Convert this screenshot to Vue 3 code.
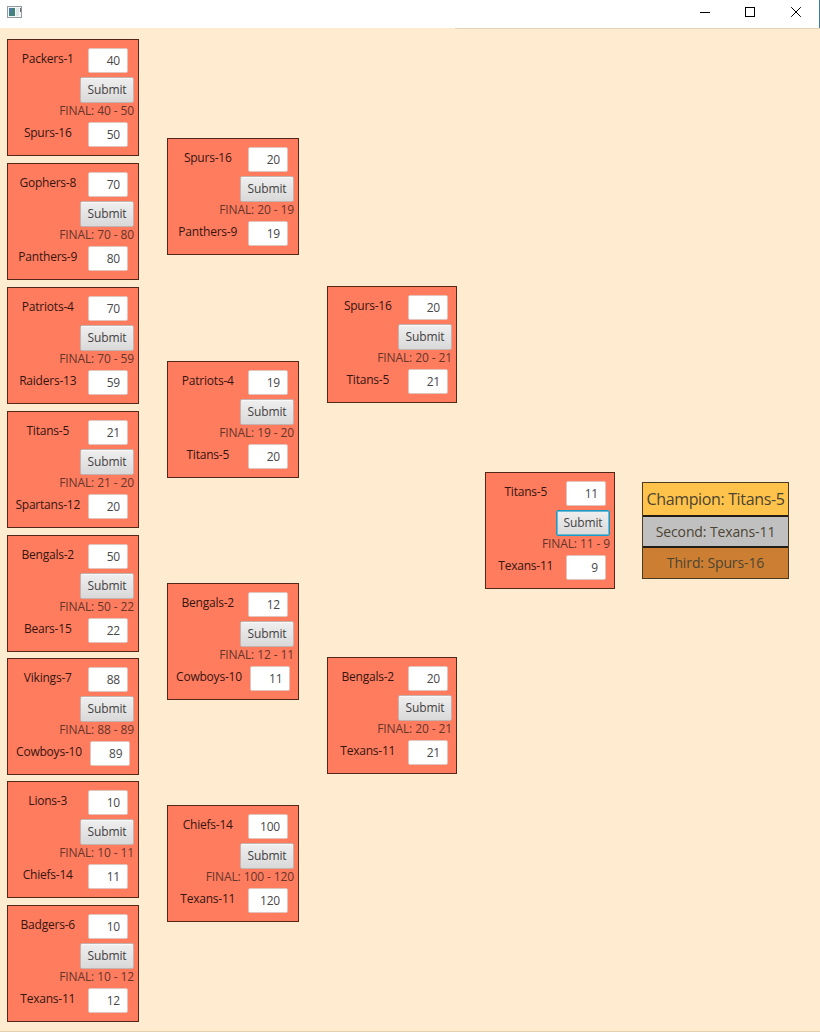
<script setup>
const g = (a, sa, b, sb, extra = {}) => ({ a, sa, b, sb, ...extra })
const rounds = [
  [
    g('Packers-1', 40, 'Spurs-16', 50),
    g('Gophers-8', 70, 'Panthers-9', 80),
    g('Patriots-4', 70, 'Raiders-13', 59),
    g('Titans-5', 21, 'Spartans-12', 20),
    g('Bengals-2', 50, 'Bears-15', 22),
    g('Vikings-7', 88, 'Cowboys-10', 89),
    g('Lions-3', 10, 'Chiefs-14', 11),
    g('Badgers-6', 10, 'Texans-11', 12),
  ],
  [
    g('Spurs-16', 20, 'Panthers-9', 19),
    g('Patriots-4', 19, 'Titans-5', 20),
    g('Bengals-2', 12, 'Cowboys-10', 11),
    g('Chiefs-14', 100, 'Texans-11', 120),
  ],
  [
    g('Spurs-16', 20, 'Titans-5', 21),
    g('Bengals-2', 20, 'Texans-11', 21),
  ],
  [g('Titans-5', 11, 'Texans-11', 9, { focused: true })],
]
</script>

<template>
  <div class="window">
    <header class="titlebar">
      <svg class="appicon" width="16" height="13" viewBox="0 0 16 13">
        <rect x="0.5" y="0.5" width="14" height="11" fill="#f4f7f7" stroke="#929b9d" />
        <rect x="2" y="2" width="6" height="8" fill="#43827c" />
        <path d="M2 2h3v4H2z" fill="#4a7ba5" />
        <rect x="9" y="2" width="3" height="8" fill="#dfe6e6" />
        <path d="M13.5 2v4" stroke="#667" />
      </svg>
      <svg class="controls" width="110" height="28" viewBox="0 0 110 28" fill="none" stroke="#000">
        <path d="M0 12.5h10" />
        <rect x="45.5" y="7.5" width="9" height="9" />
        <path d="M91.2 7.2l9.6 9.6M100.8 7.2l-9.6 9.6" />
      </svg>
    </header>
    <main class="bracket">
      <section v-for="(games, r) in rounds" :key="r" class="round" :class="'round-' + (r + 1)">
        <article v-for="(m, i) in games" :key="i" class="game">
          <div class="row">
            <span class="team">{{ m.a }}</span>
            <span class="score">{{ m.sa }}</span>
          </div>
          <button class="submit" :class="{ focused: m.focused }">Submit</button>
          <div class="final">FINAL: {{ m.sa }} - {{ m.sb }}</div>
          <div class="row">
            <span class="team" :class="{ wide: m.b === 'Cowboys-10' }">{{ m.b }}</span>
            <span class="score">{{ m.sb }}</span>
          </div>
        </article>
      </section>
      <aside class="podium">
        <div class="place gold">Champion: Titans-5</div>
        <div class="place silver">Second: Texans-11</div>
        <div class="place bronze">Third: Spurs-16</div>
      </aside>
    </main>
  </div>
</template>

<style>
body { margin: 0; background: #ffebcf; }
</style>

<style scoped>
.window {
  width: 820px;
  height: 1032px;
  box-sizing: border-box;
  display: flex;
  flex-direction: column;
  overflow: hidden;
  background: #ffebcf;
  border-bottom: 1px solid #e4d0b0;
  font-family: "Open Sans", "Noto Sans", sans-serif;
  font-size: 12px;
  line-height: 16px;
}
.titlebar {
  height: 28px;
  flex: none;
  box-sizing: border-box;
  display: flex;
  justify-content: space-between;
  background: #fff;
  border-right: 1px solid #3c7e9c;
  padding: 0 9px 0 7px;
}
.appicon { margin-top: 6px; }
.bracket {
  flex: 1;
  display: flex;
  align-items: flex-start;
  padding-left: 7px;
  background: linear-gradient(#e3d5bb, #e3d5bb) right top / 365px 1px no-repeat;
}
.round { display: flex; flex-direction: column; flex: none; }
.round-1 { width: 132px; margin-right: 28px; padding-top: 11px; gap: 7px; }
.round-1 .game:nth-child(n + 6):nth-child(-n + 7) { margin-top: -1px; }
.round-2 { width: 132px; margin-right: 28px; padding-top: 110px; gap: 105.5px; }
.round-2 .game:nth-child(4) { margin-top: -0.5px; }
.round-3 { width: 130px; margin-right: 28px; padding-top: 258px; gap: 254px; }
.round-4 { width: 130px; margin-right: 27px; padding-top: 444px; }
.game {
  height: 117px;
  box-sizing: border-box;
  background: #ff7c5f;
  border: 1px solid #542719;
  padding: 8px 4px 0 0;
  display: flex;
  flex-direction: column;
  align-items: flex-end;
}
.row { align-self: flex-start; display: flex; height: 25px; flex: none; }
.team {
  width: 79.5px;
  margin-right: 0.5px;
  height: 20px;
  text-align: center;
  line-height: 22px;
  letter-spacing: -0.22px;
  color: #35150f;
  white-space: nowrap;
}
.team.wide { width: 81.9px; }
.score {
  width: 40px;
  height: 25px;
  box-sizing: border-box;
  border: 1px solid #e3c4bc;
  border-radius: 2px;
  background: #fff;
  padding-right: 7px;
  text-align: right;
  line-height: 24px;
  letter-spacing: -0.2px;
  color: #484848;
}
.submit {
  width: 54px;
  height: 26px;
  flex: none;
  margin: 4px 0 0;
  padding: 0;
  border: 1px solid #c3b3ae;
  border-radius: 2px;
  background: linear-gradient(#efefef, #d9d9d9);
  box-shadow: inset 0 1px #f8f8f8;
  font: inherit;
  letter-spacing: -0.1px;
  color: #424242;
}
.submit.focused { border: 1px solid #169ac8; box-shadow: inset 0 0 0 1px #70b7d2; }
.final { height: 19px; line-height: 15px; letter-spacing: -0.1px; color: #66352a; white-space: nowrap; }
.podium { width: 147px; margin-top: 454px; flex: none; border: 1px solid #4b3920; box-sizing: border-box; }
.place { text-align: center; white-space: nowrap; color: #4c4433; font-size: 14px; letter-spacing: -0.12px; height: 30px; line-height: 30px; }
.gold { background: #ffc34c; font-size: 16px; letter-spacing: -0.35px; height: 32px; line-height: 33px; }
.silver { background: #c0c0c0; border-top: 2px solid #211c14; border-bottom: 2px solid #211c14; height: 29px; }
.bronze { background: #cc7f32; }
</style>
